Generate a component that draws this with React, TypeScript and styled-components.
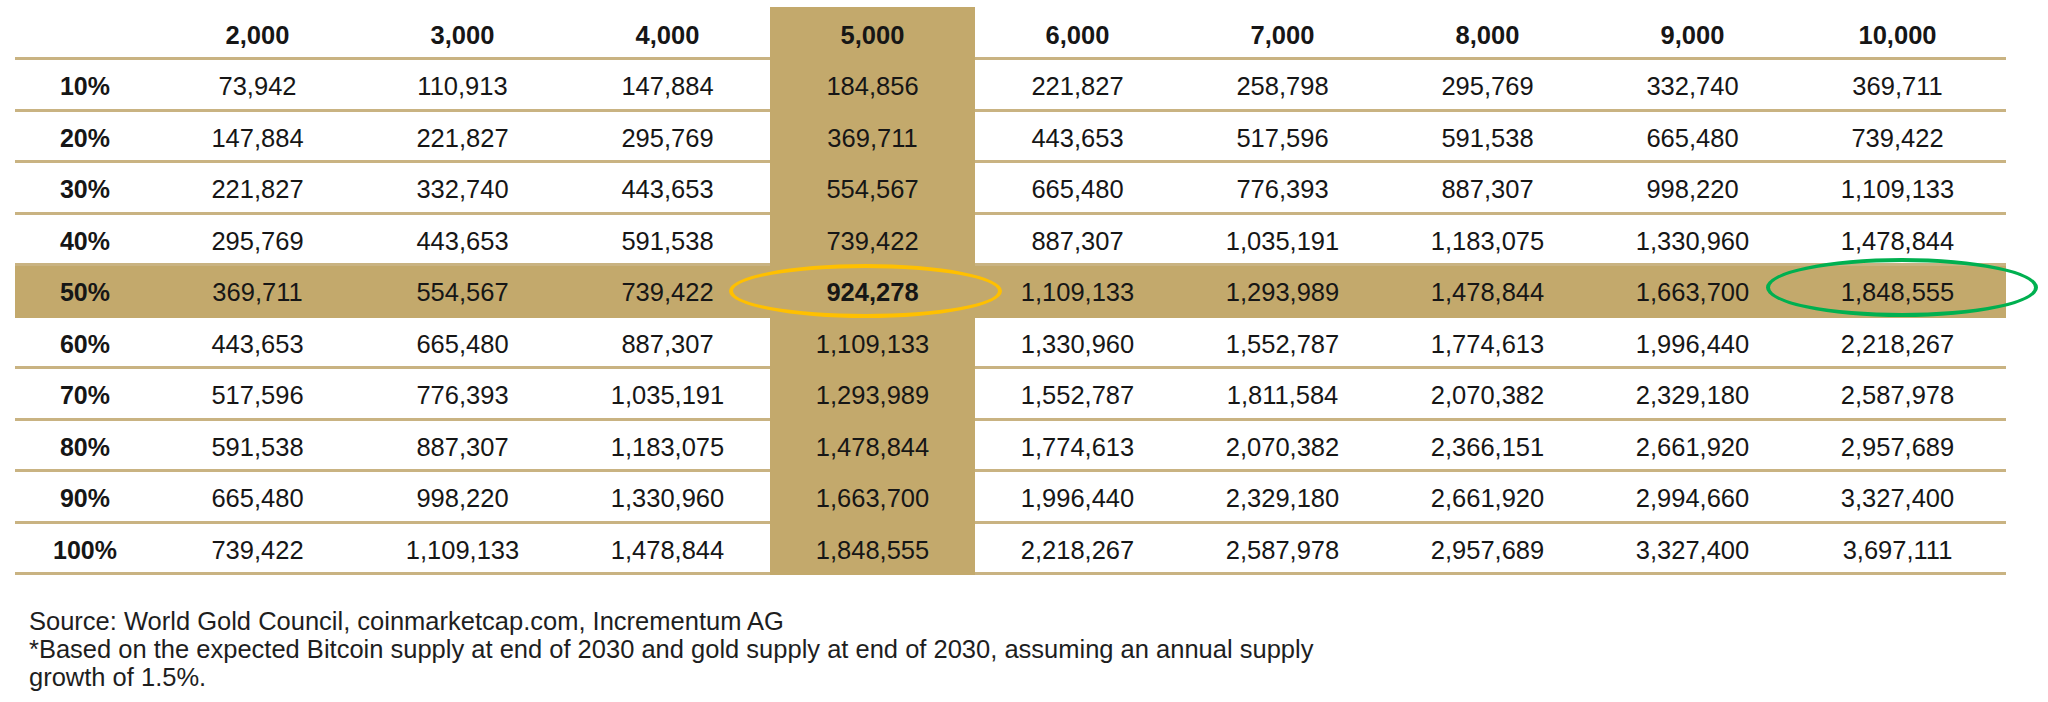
import React from "react";
import styled, { createGlobalStyle } from "styled-components";

const GOLD = "#C3A96C";
const LINE = "#C9B382";

const GlobalStyle = createGlobalStyle`
  html, body {
    margin: 0;
    padding: 0;
    background: #ffffff;
  }
  body {
    font-family: "Liberation Sans", Arial, Helvetica, sans-serif;
    color: #161616;
  }
`;

const Page = styled.div`
  width: 2048px;
  height: 702px;
  padding: 7px 0 0 15px;
  box-sizing: border-box;
  overflow: hidden;
`;

const TableWrap = styled.div`
  position: relative;
  width: 1991px;
`;

const Row = styled.div<{ $band?: boolean; $header?: boolean }>`
  display: grid;
  grid-template-columns: 140px repeat(8, 205px) 211px;
  width: 1991px;
  height: ${(p) => (p.$header ? "53px" : "51.5px")};
  background: ${(p) => (p.$band ? GOLD : "transparent")};
`;

const Cell = styled.div<{ $gold?: boolean; $bold?: boolean; $last?: boolean; $header?: boolean }>`
  display: flex;
  align-items: center;
  justify-content: center;
  box-sizing: border-box;
  padding-top: ${(p) => (p.$header ? "6px" : "5px")};
  padding-right: ${(p) => (p.$last ? "6px" : "0")};
  border-bottom: 3px solid ${(p) => (p.$gold ? GOLD : LINE)};
  background: ${(p) => (p.$gold ? GOLD : "transparent")};
  font-size: 25.5px;
  letter-spacing: 0;
  font-weight: ${(p) => (p.$bold ? 700 : 400)};
  white-space: nowrap;
`;

const LabelCell = styled(Cell)`
  font-size: 25px;
  font-weight: 700;
`;

const Ellipse = styled.div<{ $color: string }>`
  position: absolute;
  box-sizing: border-box;
  border: 4px solid ${(p) => p.$color};
  border-radius: 50%;
  pointer-events: none;
`;

const Notes = styled.div`
  margin-top: 32px;
  margin-left: 14px;
  font-size: 25.5px;
  line-height: 28px;
  color: #1e1e1e;
`;

const headers = ["2,000", "3,000", "4,000", "5,000", "6,000", "7,000", "8,000", "9,000", "10,000"];

const rows: [string, string[]][] = [
  ["10%", ["73,942", "110,913", "147,884", "184,856", "221,827", "258,798", "295,769", "332,740", "369,711"]],
  ["20%", ["147,884", "221,827", "295,769", "369,711", "443,653", "517,596", "591,538", "665,480", "739,422"]],
  ["30%", ["221,827", "332,740", "443,653", "554,567", "665,480", "776,393", "887,307", "998,220", "1,109,133"]],
  ["40%", ["295,769", "443,653", "591,538", "739,422", "887,307", "1,035,191", "1,183,075", "1,330,960", "1,478,844"]],
  ["50%", ["369,711", "554,567", "739,422", "924,278", "1,109,133", "1,293,989", "1,478,844", "1,663,700", "1,848,555"]],
  ["60%", ["443,653", "665,480", "887,307", "1,109,133", "1,330,960", "1,552,787", "1,774,613", "1,996,440", "2,218,267"]],
  ["70%", ["517,596", "776,393", "1,035,191", "1,293,989", "1,552,787", "1,811,584", "2,070,382", "2,329,180", "2,587,978"]],
  ["80%", ["591,538", "887,307", "1,183,075", "1,478,844", "1,774,613", "2,070,382", "2,366,151", "2,661,920", "2,957,689"]],
  ["90%", ["665,480", "998,220", "1,330,960", "1,663,700", "1,996,440", "2,329,180", "2,661,920", "2,994,660", "3,327,400"]],
  ["100%", ["739,422", "1,109,133", "1,478,844", "1,848,555", "2,218,267", "2,587,978", "2,957,689", "3,327,400", "3,697,111"]],
];

const GOLD_COL = 3;
const BAND_ROW = 4;

export default function App() {
  return (
    <>
      <GlobalStyle />
      <Page>
        <TableWrap>
          <Row $header>
            <Cell $header />
            {headers.map((h, i) => (
              <Cell key={h} $header $bold $gold={i === GOLD_COL} $last={i === headers.length - 1}>
                {h}
              </Cell>
            ))}
          </Row>
          {rows.map(([label, vals], r) => {
            const band = r === BAND_ROW;
            return (
              <Row key={label} $band={band}>
                <LabelCell $gold={band}>{label}</LabelCell>
                {vals.map((v, i) => (
                  <Cell
                    key={i}
                    $gold={band || i === GOLD_COL}
                    $bold={band && i === GOLD_COL}
                    $last={i === vals.length - 1}
                  >
                    {v}
                  </Cell>
                ))}
              </Row>
            );
          })}
          <Ellipse $color="#FFC000" style={{ left: 714, top: 257, width: 273, height: 54 }} />
          <Ellipse $color="#00B050" style={{ left: 1751, top: 251, width: 272, height: 59 }} />
        </TableWrap>
        <Notes>
          Source: World Gold Council, coinmarketcap.com, Incrementum AG
          <br />
          *Based on the expected Bitcoin supply at end of 2030 and gold supply at end of 2030, assuming an annual supply
          <br />
          growth of 1.5%.
        </Notes>
      </Page>
    </>
  );
}
